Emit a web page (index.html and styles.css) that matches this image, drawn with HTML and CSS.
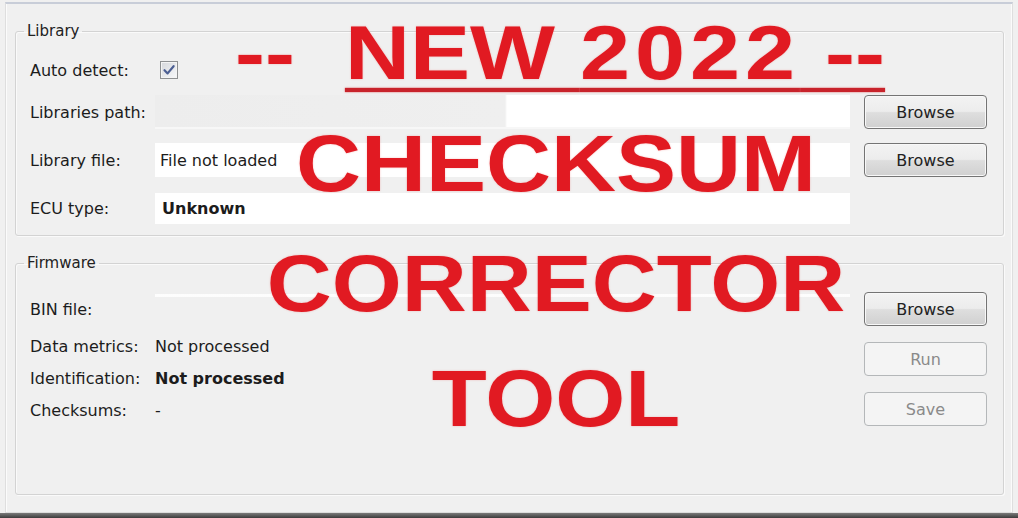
FILE: index.html
```html
<!DOCTYPE html>
<html lang="en">
<head>
    <meta charset="UTF-8">
    <meta name="viewport" content="width=device-width, initial-scale=1.0">
    <title>Checksum Corrector</title>
    <link rel="stylesheet" href="styles.css">
</head>
<body>
    <div class="window">
        <div class="frame">
            <fieldset class="group">
                <legend>Library</legend>
                <div class="lib-rows">
                    <span class="label first-row">Auto detect:</span>
                    <span class="check-cell first-row">
                        <span class="checkbox">
                            <svg width="14" height="14" viewBox="0 0 14 14"><path d="M2.5 7.2 L5.6 10.4 L11.6 3.2" fill="none" stroke="#4c5f93" stroke-width="2.2" stroke-linecap="round" stroke-linejoin="round"/></svg>
                        </span>
                    </span>
                    <span></span>

                    <span class="label">Libraries path:</span>
                    <span class="field field-path"></span>
                    <button class="button">Browse</button>

                    <span class="label">Library file:</span>
                    <span class="field">File not loaded</span>
                    <button class="button">Browse</button>

                    <span class="label">ECU type:</span>
                    <span class="field field-bold">Unknown</span>
                    <span></span>
                </div>
            </fieldset>

            <fieldset class="group group-firmware">
                <legend>Firmware</legend>
                <div class="fw-body">
                    <div class="fw-left">
                        <div class="fw-row bin-row">
                            <span class="label">BIN file:</span>
                            <span class="bin-field"></span>
                        </div>
                        <div class="fw-row info-row">
                            <span class="label">Data metrics:</span>
                            <span class="value">Not processed</span>
                        </div>
                        <div class="fw-row info-row">
                            <span class="label">Identification:</span>
                            <span class="value value-bold">Not processed</span>
                        </div>
                        <div class="fw-row info-row">
                            <span class="label">Checksums:</span>
                            <span class="value">-</span>
                        </div>
                    </div>
                    <div class="fw-buttons">
                        <button class="button">Browse</button>
                        <button class="button" disabled>Run</button>
                        <button class="button" disabled>Save</button>
                    </div>
                </div>
            </fieldset>
        </div>
        <div class="statusbar"></div>
    </div>

    <!-- big red banner over the form -->
    <div class="banner">
        <div class="banner-line line-new">--  <span class="underlined">NEW <span class="digits">2022</span> --</span></div>
        <div class="banner-line line-checksum">CHECKSUM</div>
        <div class="banner-line line-corrector">CORRECTOR</div>
        <div class="banner-line line-tool">TOOL</div>
    </div>
</body>
</html>
```

FILE: styles.css
```css
body {
    margin: 0;
    width: 1018px;
    height: 518px;
    overflow: hidden;
    position: relative;
    background-color: #f0f0f0;
    font-family: "DejaVu Sans", Verdana, sans-serif;
    font-size: 16px;
    color: #1c1c1c;
}

.window {
    box-sizing: border-box;
    height: 518px;
    padding-top: 2px;
    display: flex;
    flex-direction: column;
}

.frame {
    flex: 1;
    margin: 0 5px;
    padding: 0 8px 0 9px;
    border-top: 2px solid #c8cdd8;
    border-left: 1px solid #dedede;
    border-right: 1px solid #dedede;
    border-bottom: 1px solid #dcdcdc;
    box-shadow: inset 1px 0 0 #fbfbfb, inset -1px 0 0 #fbfbfb;
}

.statusbar {
    height: 5px;
    background: linear-gradient(#7a7a7a, #3c3c3c);
}

/* group boxes */

.group {
    margin: 18px 0 0;
    padding: 0 0 10px 0;
    min-width: 0;
    border: 1px solid #d3d3d3;
    border-radius: 3px;
    box-shadow: inset 1px 1px 0 #fafafa, 1px 1px 0 #fafafa;
}

.group legend {
    margin-left: 8px;
    padding: 0 3px;
    font-size: 15px;
    line-height: 18px;
    color: #222;
}

.group-firmware {
    margin-top: 18px;
    padding-bottom: 68px;
}

.lib-rows {
    display: grid;
    grid-template-columns: 111px 695px 123px;
    grid-template-rows: 26px 34px 34px 34px;
    column-gap: 14px;
    row-gap: 14px;
    padding: 15px 0 0 14px;
    align-items: center;
}

.first-row {
    margin-top: 4px;
}

.label {
    white-space: nowrap;
}

.check-cell {
    display: flex;
    align-items: center;
    padding-left: 5px;
}

.checkbox {
    box-sizing: border-box;
    width: 18px;
    height: 18px;
    border: 1px solid #8e9092;
    background: linear-gradient(135deg, #d6d8dc, #f7f8fa);
    box-shadow: inset 0 0 0 1px #f4f4f4;
    display: flex;
    align-items: center;
    justify-content: center;
}

.field {
    box-sizing: border-box;
    height: 34px;
    display: flex;
    align-items: center;
    padding-left: 5px;
    background-color: #fff;
    white-space: nowrap;
}

.field-path {
    background: linear-gradient(to right, #ededed 0, #efefef 350px, #fff 352px);
    box-shadow: inset 0 -2px 0 #f7f7f7;
}

.field-bold {
    font-weight: bold;
    padding-left: 7px;
    height: 31px;
}

/* buttons */

.button {
    box-sizing: border-box;
    width: 123px;
    height: 34px;
    padding: 0;
    border: 1px solid #747474;
    border-radius: 4px;
    background: linear-gradient(#f3f3f3 0%, #ececec 48%, #dedede 52%, #d0d0d0 100%);
    box-shadow: inset 0 0 0 1px #f8f8f8;
    font-family: "DejaVu Sans", Verdana, sans-serif;
    font-size: 16px;
    color: #222;
}

.button:disabled {
    border-color: #b4b7b9;
    background: #f4f4f4;
    box-shadow: none;
    color: #8a8a8a;
}

/* firmware section */

.fw-body {
    display: flex;
    gap: 14px;
    padding: 20px 0 0 14px;
}

.fw-left {
    width: 820px;
    display: flex;
    flex-direction: column;
}

.fw-row {
    display: grid;
    grid-template-columns: 125px 1fr;
    align-items: center;
}

.bin-row {
    height: 34px;
    margin-bottom: 4px;
}

.bin-field {
    height: 34px;
    background: linear-gradient(transparent 2px, rgba(255, 255, 255, 0.85) 2px, rgba(255, 255, 255, 0.85) 5px, transparent 5px);
}

.info-row {
    height: 32px;
}

.value {
    white-space: nowrap;
}

.value-bold {
    font-weight: bold;
}

.fw-buttons {
    display: flex;
    flex-direction: column;
    gap: 16px;
}

/* red banner text */

.banner {
    position: absolute;
    top: 0;
    left: 0;
    right: 0;
    padding-left: 94px;
    pointer-events: none;
    font-family: "Liberation Sans", Arial, sans-serif;
    font-weight: bold;
    color: #e11a22;
    text-align: center;
    text-shadow: 0 0 2px rgba(235, 90, 90, 0.45);
}

.banner-line {
    height: 90px;
    font-size: 90px;
    line-height: 90px;
    white-space: pre;
    transform: scaleY(0.88);
}

.line-new {
    margin-top: 8px;
    padding-left: 8px;
    transform: scaleY(0.85);
}

.digits {
    letter-spacing: 5px;
}

.underlined {
    text-decoration: underline;
    text-decoration-thickness: 5px;
    text-underline-offset: 10px;
    text-decoration-color: #c8232b;
    text-decoration-skip-ink: none;
}

.line-checksum {
    margin-top: 21px;
}

.line-corrector {
    margin-top: 30px;
}

.line-tool {
    margin-top: 25px;
}
```
